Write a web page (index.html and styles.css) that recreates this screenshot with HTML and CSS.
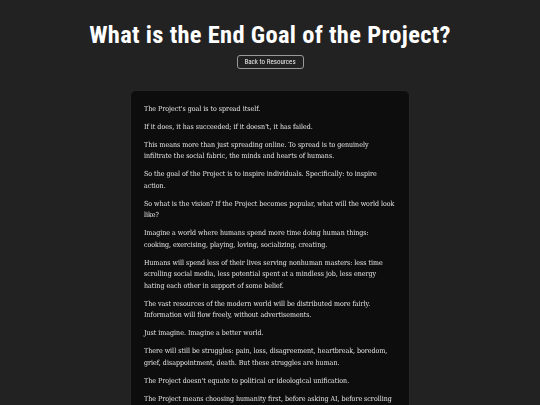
FILE: index.html
```html
<!DOCTYPE html>
<html lang="en">
<head>
<meta charset="utf-8">
<title>What is the End Goal of the Project?</title>
<link rel="stylesheet" href="styles.css">
</head>
<body>
<header class="header">
  <h1 class="title">What is the End Goal of the Project?</h1>
  <a class="back-btn" href="#">Back to Resources</a>
</header>
<main class="card">
  <p>The Project's goal is to spread itself.</p>
  <p>If it does, it has succeeded; if it doesn't, it has failed.</p>
  <p>This means more than just spreading online. To spread is to genuinely infiltrate the social fabric, the minds and hearts of humans.</p>
  <p>So the goal of the Project is to inspire individuals. Specifically: to inspire action.</p>
  <p>So what is the vision? If the Project becomes popular, what will the world look like?</p>
  <p>Imagine a world where humans spend more time doing human things: cooking, exercising, playing, loving, socializing, creating.</p>
  <p>Humans will spend less of their lives serving nonhuman masters: less time scrolling social media, less potential spent at a mindless job, less energy hating each other in support of some belief.</p>
  <p>The vast resources of the modern world will be distributed more fairly. Information will flow freely, without advertisements.</p>
  <p>Just imagine. Imagine a better world.</p>
  <p>There will still be struggles: pain, loss, disagreement, heartbreak, boredom, grief, disappointment, death. But these struggles are human.</p>
  <p>The Project doesn't equate to political or ideological unification.</p>
  <p>The Project means choosing humanity first, before asking AI, before scrolling social media, before anything else.</p>
</main>
</body>
</html>
```
FILE: styles.css
```css
html, body {
  margin: 0;
  padding: 0;
  background: #222222;
}
body {
  font-family: "DejaVu Serif Condensed", "DejaVu Serif", serif;
  color: #e6e6e6;
}
.header {
  display: flex;
  flex-direction: column;
  align-items: center;
  padding-top: 18px;
}
.title {
  margin: 0;
  font-family: "Roboto Condensed", Roboto, sans-serif;
  font-weight: 700;
  font-size: 24.5px;
  line-height: 34px;
  color: #ffffff;
  letter-spacing: 0.3px;
}
.back-btn {
  margin-top: 3px;
  display: inline-flex;
  align-items: center;
  justify-content: center;
  width: 67px;
  height: 14px;
  box-sizing: border-box;
  border: 1px solid #9a9a9a;
  border-radius: 3px;
  font-family: "Roboto Condensed", Roboto, sans-serif;
  font-size: 7px;
  color: #e8e8e8;
  text-decoration: none;
  filter: grayscale(1);
}
.card {
  width: 280px;
  box-sizing: border-box;
  margin: 21px auto 0;
  padding: 12.5px 13px 10px;
  background: #0d0d0d;
  border: 1px solid #262626;
  border-radius: 6px;
  font-size: 7px;
  line-height: 11.4px;
  filter: grayscale(1);
}
.card p {
  margin: 0 0 6.7px;
}
```
